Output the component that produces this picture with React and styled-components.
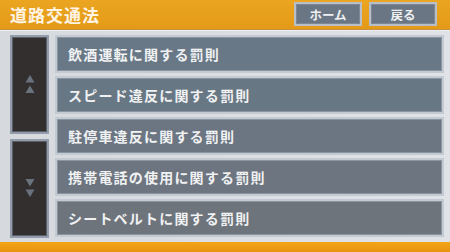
import React from 'react'
import styled, { createGlobalStyle } from 'styled-components'

const GlobalStyle = createGlobalStyle`
  html, body {
    margin: 0;
    padding: 0;
    background: #dcdfe3;
  }
  * { box-sizing: border-box; }
`

const items = [
  '飲酒運転に関する罰則',
  'スピード違反に関する罰則',
  '駐停車違反に関する罰則',
  '携帯電話の使用に関する罰則',
  'シートベルトに関する罰則',
]

const Arrows = ({ dir }) => (
  <svg width="10" height="20" viewBox="0 0 10 20">
    {dir === 'up' ? (
      <>
        <polygon points="5,1 9.5,8.5 0.5,8.5" fill="#69737e" />
        <polygon points="5,11.5 9.5,19 0.5,19" fill="#69737e" />
      </>
    ) : (
      <>
        <polygon points="0.5,1 9.5,1 5,8.5" fill="#69737e" />
        <polygon points="0.5,11.5 9.5,11.5 5,19" fill="#69737e" />
      </>
    )}
  </svg>
)

export default function App() {
  return (
    <>
      <GlobalStyle />
      <Screen>
        <Header>
          <Title>道路交通法</Title>
          <HeaderButtons>
            <NavButton>ホーム</NavButton>
            <NavButton>戻る</NavButton>
          </HeaderButtons>
        </Header>
        <Main>
          <ScrollColumn>
            <ScrollButton grow={98}>
              <Arrows dir="up" />
            </ScrollButton>
            <ScrollButton grow={99}>
              <Arrows dir="down" />
            </ScrollButton>
          </ScrollColumn>
          <List>
            {items.map((t, i) => (
              <Row key={t} index={i}>{t}</Row>
            ))}
          </List>
        </Main>
        <Footer />
      </Screen>
    </>
  )
}

const Screen = styled.div`
  width: 450px;
  height: 252px;
  display: flex;
  flex-direction: column;
  overflow: hidden;
  font-family: "Noto Sans CJK JP", "Noto Sans", sans-serif;
`

const Header = styled.div`
  height: 30px;
  flex: none;
  display: flex;
  align-items: flex-start;
  justify-content: space-between;
  padding: 2px 13px 0 10px;
  background: linear-gradient(#eba520, #e39a18);
  border-bottom: 1px solid #c89040;
`

const Title = styled.div`
  color: #fff4e4;
  font-size: 17px;
  font-weight: 700;
  letter-spacing: 1px;
  line-height: 24px;
  margin-top: 1px;
`

const HeaderButtons = styled.div`
  display: flex;
  gap: 7px;
`

const NavButton = styled.div`
  width: 68px;
  height: 24px;
  display: flex;
  align-items: center;
  justify-content: center;
  background: #6b7684;
  border: 2px solid #b9bfc8;
  box-shadow: inset 0 0 0 1px #7e8894;
  color: #eef0f2;
  font-size: 12.5px;
  font-weight: 700;
`

const Main = styled.div`
  flex: 1;
  display: flex;
  gap: 6px;
  padding: 4px 6px 4px 10px;
  background: linear-gradient(90deg, #d6d9dd, #dfe2e6);
  border-top: 1px solid #eceef0;
`

const ScrollColumn = styled.div`
  width: 39px;
  display: flex;
  flex-direction: column;
  gap: 5px;
`

const ScrollButton = styled.div`
  flex: ${({ grow }) => grow};
  display: flex;
  align-items: center;
  justify-content: center;
  background: #332f2f;
  border: 2px solid #929cab;
  box-shadow: inset 0 0 0 1px #5a5f68;
`

const List = styled.div`
  flex: 1;
  display: flex;
  flex-direction: column;
  gap: 3px;
`

const rowColors = ['#687886', '#687784', '#6b7682', '#6d7580', '#6e747c']

const Row = styled.div`
  height: 38px;
  display: flex;
  align-items: center;
  padding-left: 11px;
  background: ${({ index }) => rowColors[index]};
  border: 2px solid #c3cad2;
  box-shadow: inset 0 0 0 1px #8a95a1;
  color: #f0f1f2;
  font-size: 14px;
  font-weight: 700;
  letter-spacing: 1.2px;
`

const Footer = styled.div`
  height: 10px;
  flex: none;
  background: linear-gradient(#f3a515, #e99312);
`
